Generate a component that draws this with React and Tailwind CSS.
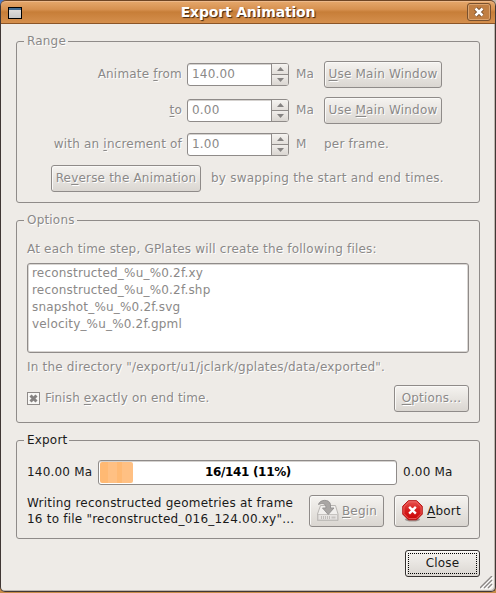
import React from "react";

const etched = "text-[#8b8988] [text-shadow:1px_1px_0_#ffffff]";

function Key({ children }) {
  return <span className="underline decoration-1 underline-offset-2">{children}</span>;
}

function Group({ title, className, disabled, children }) {
  return (
    <section className={`w-[464px] rounded-[3px] border border-[#8f8b89] ${className}`}>
      <div className="flex h-0 items-center pl-[7px]">
        <span className={`mb-[2px] bg-[#eeebe7] pl-[3px] pr-[2px] leading-4 ${disabled ? etched : "text-[#1a1a1a]"}`}>{title}</span>
      </div>
      {children}
    </section>
  );
}

function Button({ className, disabled = true, children }) {
  return (
    <button
      className={`flex shrink-0 items-center justify-center whitespace-nowrap rounded-[3px] border border-[#8f8b89] bg-gradient-to-b from-[#f5f3f0] to-[#dad6d1] shadow-[inset_1px_1px_0_#faf9f7] ${disabled ? etched : "text-[#1a1a1a]"} ${className}`}
    >
      {children}
    </button>
  );
}

function Spin({ value }) {
  return (
    <div className="ml-[5px] flex h-[23px] w-[102px] shrink-0 overflow-hidden rounded-[3px] border border-[#8f8b89] bg-white text-[#8b8988] shadow-[inset_0_1px_0_#d5d2cf] [text-shadow:none]">
      <span className="flex-1 pl-[4px] leading-[20px]">{value}</span>
      <div className="flex w-[17px] flex-col border-l border-[#8f8b89] bg-[#eae7e3]">
        <div className="flex h-[11px] items-center justify-center border-b border-[#8f8b89] bg-gradient-to-b from-[#f5f3f0] to-[#e3dfdb]">
          <svg width="7" height="4"><path d="M3.5 0L7 4H0z" fill="#858281" /></svg>
        </div>
        <div className="flex h-[10px] items-center justify-center bg-gradient-to-b from-[#f0edea] to-[#dad6d1]">
          <svg width="7" height="4"><path d="M0 0h7L3.5 4z" fill="#858281" /></svg>
        </div>
      </div>
    </div>
  );
}

function DriveIcon() {
  return (
    <svg width="24" height="24" viewBox="0 0 24 24">
      <path d="M4.500 6.500h15L22 15v6.500H1.500V15z" fill="#f1efed" stroke="#b9b6b3" />
      <path d="M2 15.500h19.500V21H2z" fill="#e6e3e1" stroke="#c6c3c0" />
      <path d="M5.500 17v3M7.500 17v3M9.500 17v3M11.500 17v3M13.500 17v3" stroke="#c0bdba" />
      <path d="M15.500 18.500h4" stroke="#c6c3c0" strokeWidth="2" />
      <path d="M2.500 5.500C3.500 .5 13.500 -.5 14.500 5.500v3.500h3.500l-5.800 6.500L6.500 9H10C10 4.500 6.500 3.500 2.500 5.500z" fill="#a9a6a4" stroke="#929090" strokeWidth=".9" />
    </svg>
  );
}

function StopIcon() {
  return (
    <svg width="21" height="22" viewBox="0 0 22 23">
      <defs>
        <linearGradient id="stop" x1="0" y1="0" x2="0" y2="1">
          <stop offset="0" stopColor="#e9534f" />
          <stop offset=".5" stopColor="#d51d1d" />
          <stop offset="1" stopColor="#cc0505" />
        </linearGradient>
      </defs>
      <ellipse cx="11" cy="20.500" rx="8" ry="2" fill="#9e9995" />
      <path d="M6.700 .7h8.600L21.200 6.500v8.300L15.300 20.700H6.700L.8 14.800V6.500z" fill="url(#stop)" stroke="#b30c0c" />
      <path d="M7.200 1.900h7.600L20 7v7.300l-5.200 5.200H7.200L2 14.300V7z" fill="none" stroke="#f07470" strokeWidth=".8" />
      <path d="M7.500 7.200l7 7M14.500 7.200l-7 7" stroke="#fff" strokeWidth="2.500" />
    </svg>
  );
}

export default function App() {
  return (
    <div className="h-[593px] w-[496px] overflow-hidden bg-[linear-gradient(90deg,#4d79c4_50%,#c3b7a8_50%)] font-['DejaVu_Sans',sans-serif] text-[12px] leading-4 tracking-[0.19px]">
      <div className="h-[593px] bg-[linear-gradient(transparent_50%,#c78b48_50%)]">
        <main className="flex h-[592px] flex-col rounded-t-[6px] rounded-b-[5px] border-x border-b border-[#403735] bg-[#eeebe7] shadow-[inset_-1px_-1px_0_#bdb5ae]">
          <header className="flex h-[24px] shrink-0 items-center rounded-t-[5px] border-b border-t border-b-[#8b5527] border-t-[#6e4524] bg-[linear-gradient(#e5a86c,#d79150_38%,#c77e38_50%,#d58f4d)] pl-[7px] pr-[4px] shadow-[inset_0_1px_0_#edb98a]">
            <div className="mt-[2px] h-[12px] w-[14px] border border-black bg-gradient-to-b from-[#e5e2e0] to-[#c8c8c8]">
              <div className="h-[2px] bg-[#426b91]" />
            </div>
            <h1 className="flex-1 pl-[7px] text-center text-[14px] font-bold leading-[20px] tracking-[-0.18px] text-white [text-shadow:1px_1px_1px_#3d2612]">Export Animation</h1>
            <button className="flex h-[18px] w-[24px] items-center justify-center rounded-[3px] border border-[#78502e] bg-[#c17f43] shadow-[inset_0_0_0_1px_#dba36e]">
              <svg width="12" height="12" viewBox="0 0 12 12"><path d="M2.500 2.500l7 7M9.500 2.500l-7 7" stroke="#684020" strokeWidth="4" /><path d="M2.500 2.500l7 7M9.500 2.500l-7 7" stroke="#fff" strokeWidth="2.600" /></svg>
            </button>
          </header>

          <Group title="Range" disabled className="ml-[15px] mt-[17px] h-[162px] shrink-0">
            <div className={`flex flex-col whitespace-nowrap pt-[19px] ${etched}`}>
              <div className="flex h-[27px] items-center">
                <span className="w-[165px] pb-[2px] text-right">Animate <Key>f</Key>rom</span>
                <Spin value="140.00" />
                <span className="ml-[7px] w-[28px] pb-[2px]">Ma</span>
                <Button className="h-[27px] w-[118px] pb-[2px]"><span><Key>U</Key>se Main Window</span></Button>
              </div>
              <div className="mt-[9px] flex h-[27px] items-center">
                <span className="w-[165px] pb-[2px] text-right"><Key>t</Key>o</span>
                <Spin value="0.00" />
                <span className="ml-[7px] w-[28px] pb-[2px]">Ma</span>
                <Button className="h-[27px] w-[118px] pb-[2px]"><span>Use <Key>M</Key>ain Window</span></Button>
              </div>
              <div className="mt-[9px] flex h-[23px] items-center">
                <span className="w-[165px] pb-[2px] text-right">with an <Key>i</Key>ncrement of</span>
                <Spin value="1.00" />
                <span className="ml-[7px] w-[28px] pb-[2px]">M</span>
                <span className="pb-[2px]">per frame.</span>
              </div>
              <div className="mt-[9px] flex h-[27px] items-center pl-[34px]">
                <Button className="h-[27px] w-[150px] pb-[2px]"><span>Re<Key>v</Key>erse the Animation</span></Button>
                <span className="ml-[10px] pb-[2px] tracking-[0.22px]">by swapping the start and end times.</span>
              </div>
            </div>
          </Group>

          <Group title="Options" disabled className="ml-[15px] mt-[17px] h-[203px] shrink-0">
            <div className={`flex flex-col whitespace-nowrap px-[10px] pt-[20px] ${etched}`}>
              <p>At each time step, GPlates will create the following files:</p>
              <ul className="mt-[6px] h-[90px] rounded-[3px] border border-[#8f8b89] bg-white pl-[4px] pt-px leading-[17px] shadow-[inset_0_0_0_1px_#d9d6d3] [text-shadow:none]">
                <li>reconstructed_%u_%0.2f.xy</li>
                <li>reconstructed_%u_%0.2f.shp</li>
                <li>snapshot_%u_%0.2f.svg</li>
                <li>velocity_%u_%0.2f.gpml</li>
              </ul>
              <p className="mt-[6px]">In the directory "/export/u1/jclark/gplates/data/exported".</p>
              <div className="mt-[10px] flex h-[27px] items-center">
                <div className="mb-px flex h-[13px] w-[13px] items-center justify-center border border-[#8f8b89] bg-[#f8f7f5]">
                  <svg width="9" height="9"><path d="M1.500 1.500l6 6M7.500 1.500l-6 6" stroke="#858281" strokeWidth="3" /></svg>
                </div>
                <span className="ml-[5px] flex-1 pb-[2px] tracking-[0.12px]">Finish <Key>e</Key>xactly on end time.</span>
                <Button className="h-[27px] w-[75px] pb-[2px]"><span><Key>O</Key>ptions...</span></Button>
              </div>
            </div>
          </Group>

          <Group title="Export" className="ml-[15px] mt-[17px] h-[99px] shrink-0">
            <div className="flex flex-col whitespace-nowrap px-[10px] pt-[19px] text-[#1a1a1a]">
              <div className="flex h-[25px] items-center">
                <span className="w-[71px] pb-[2px]">140.00 Ma</span>
                <div className="grid h-[25px] w-[299px] items-center rounded-[3px] border border-[#8f8b89] bg-white pl-px shadow-[inset_0_1px_0_#d5d2cf]">
                  <div className="col-start-1 row-start-1 h-[21px] w-[33px] rounded-[2px] bg-[linear-gradient(90deg,#ffb973_0_8px,#ffc083_8px_17px,#ffb973_17px_22px,#ffc083_22px)]" />
                  <span className="col-start-1 row-start-1 pb-[2px] text-center text-[12px] font-bold tracking-[-0.33px] text-black">16/141 (11%)</span>
                </div>
                <span className="ml-[6px] pb-[2px]">0.00 Ma</span>
              </div>
              <div className="mt-[10px] flex h-[32px] items-center">
                <p className="w-[282px] tracking-[0.22px]">Writing reconstructed geometries at frame<br />16 to file "reconstructed_016_124.00.xy"...</p>
                <Button className="h-[32px] w-[75px] gap-[2px]"><DriveIcon /><span className="pb-px"><Key>B</Key>egin</span></Button>
                <Button disabled={false} className="ml-[10px] h-[32px] w-[75px] gap-[4px]"><StopIcon /><span className="pb-px"><Key>A</Key>bort</span></Button>
              </div>
            </div>
          </Group>

          <footer className="mt-[11px] flex h-[39px] shrink-0 items-start justify-end pr-[2px]">
            <Button disabled={false} className="h-[27px] w-[75px] border-[#353130] p-[2px]">
              <span className="flex h-full w-full items-center justify-center border border-dotted border-black pb-[2px]">Close</span>
            </Button>
            <svg className="mt-[26px]" width="13" height="13">
              <path d="M1 13L13 1M5 13L13 5M9 13L13 9" stroke="#fff" strokeWidth="1.500" />
              <path d="M0 12L12 0M4 12L12 4M8 12L12 8" stroke="#8b8785" strokeWidth="1.400" />
            </svg>
          </footer>
        </main>
      </div>
    </div>
  );
}
